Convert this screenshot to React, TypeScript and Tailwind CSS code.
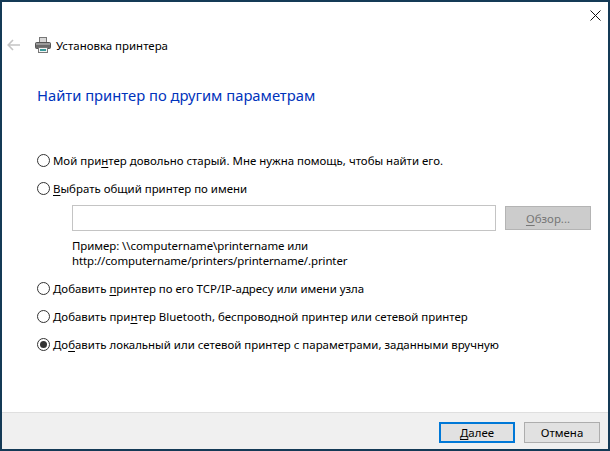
import React from 'react';

const FONT = "font-['Noto_Sans','Open_Sans',sans-serif]";

function Radio({ checked }: { checked?: boolean }) {
  return (
    <span className="w-[13px] h-[13px] rounded-full border border-[#333] bg-white flex items-center justify-center shrink-0">
      {checked && <span className="w-[7px] h-[7px] rounded-full bg-[#333]" />}
    </span>
  );
}

function Option({ before, u, after, checked }: { before: string; u: string; after: string; checked?: boolean }) {
  return (
    <div className="flex items-center gap-[3px] h-[17px] whitespace-nowrap">
      <Radio checked={checked} />
      <span>
        {before}
        <span className="underline underline-offset-2">{u}</span>
        {after}
      </span>
    </div>
  );
}

function PrinterIcon() {
  return (
    <svg width="16" height="16" viewBox="0 0 16 16">
      <rect x="4.5" y="0.5" width="7" height="5" fill="#d8d8d8" stroke="#777" />
      <rect x="0.5" y="5.5" width="15" height="6" rx="1" fill="#6a6a6a" stroke="#555" />
      <rect x="1" y="6" width="14" height="2" fill="#9a9a9a" />
      <rect x="3.5" y="10.5" width="9" height="5" fill="#f4f4f4" stroke="#777" />
      <rect x="5" y="12" width="6" height="2" fill="#3a9a9a" />
    </svg>
  );
}

export default function App() {
  return (
    <div className={`${FONT} w-[610px] h-[451px] border-2 border-[#143a56] bg-white flex flex-col text-[11.45px] leading-[17px] text-black overflow-hidden`}>
      <div className="flex justify-end h-[21px] pr-[7px] pt-[8px]">
        <svg width="11" height="11" viewBox="0 0 11 11">
          <path d="M0.5 0.5L10.5 10.5M10.5 0.5L0.5 10.5" stroke="#111" strokeWidth="1" fill="none" />
        </svg>
      </div>

      <div className="flex items-center h-[20px] mt-[12px]">
        <svg width="14" height="12" viewBox="0 0 14 12" className="ml-[5px]">
          <path d="M6 1L1.2 6L6 11M1.2 6H13" stroke="#c4c4c4" strokeWidth="1.6" fill="none" />
        </svg>
        <span className="ml-[14px]"><PrinterIcon /></span>
        <span className="ml-[5px]">Установка принтера</span>
      </div>

      <h1 className="ml-[35px] mt-[29px] text-[14.75px] leading-[22px] font-normal text-[#0033bc]">
        Найти принтер по другим параметрам
      </h1>

      <div className="ml-[35px] mt-[46px] flex flex-col flex-1">
        <Option before="Мой при" u="н" after="тер довольно старый. Мне нужна помощь, чтобы найти его." />
        <div className="mt-[11px]">
          <Option before="" u="В" after="ыбрать общий принтер по имени" />
        </div>
        <div className="ml-[35px] mt-[8px] flex gap-[9px]">
          <div className="w-[424px] h-[26px] border border-[#c4c4c4] bg-white" />
          <div className="w-[86px] h-[24px] mt-[1px] border border-[#b4b4b4] bg-[#cccccc] text-[#777] flex items-center justify-center">
            <span><span className="underline underline-offset-2">О</span>бзор...</span>
          </div>
        </div>
        <div className="ml-[35px] mt-[7px] leading-[15px] whitespace-nowrap">
          <div className="tracking-[-0.05px]">Пример: \\computername\printername или</div>
          <div className="tracking-[-0.1px]">http://computername/printers/printername/.printer</div>
        </div>
        <div className="mt-[12px]">
          <Option before="Добавить " u="п" after="ринтер по его TCP/IP-адресу или имени узла" />
        </div>
        <div className="mt-[11px]">
          <Option before="Добавить при" u="н" after="тер Bluetooth, беспроводной принтер или сетевой принтер" />
        </div>
        <div className="mt-[11px]">
          <Option checked before="До" u="б" after="авить локальный или сетевой принтер с параметрами, заданными вручную" />
        </div>
      </div>

      <div className="h-[37px] bg-[#f0f0f0] border-t border-[#dfdfdf] flex justify-end items-start pt-[9px] pr-[8px] gap-[9px]">
        <div className="w-[76px] h-[21px] border-2 border-[#0078d7] bg-[#e1e1e1] flex items-center justify-center">
          <span><span className="underline underline-offset-2">Д</span>алее</span>
        </div>
        <div className="w-[76px] h-[21px] border border-[#adadad] bg-[#e1e1e1] flex items-center justify-center">
          Отмена
        </div>
      </div>
    </div>
  );
}
